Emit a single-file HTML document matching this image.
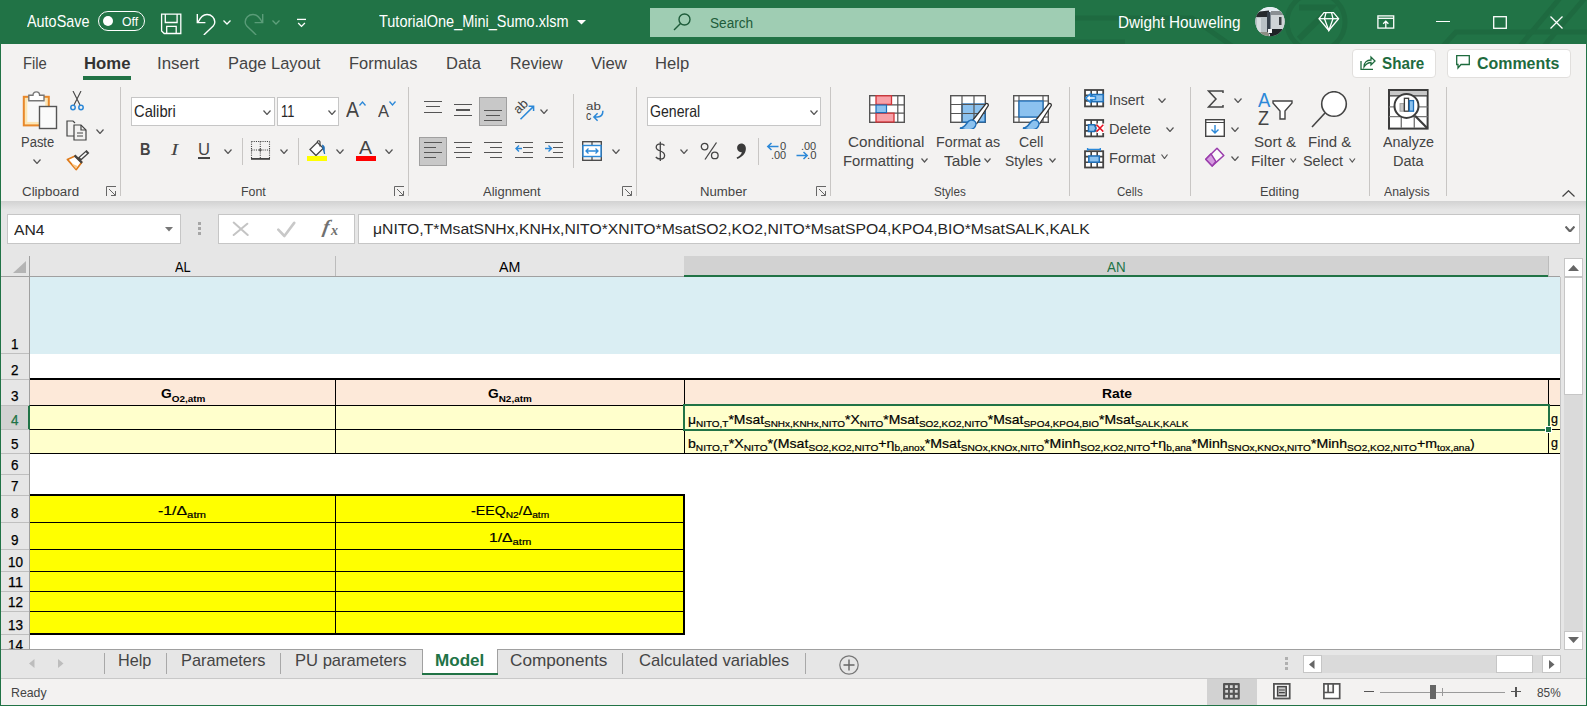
<!DOCTYPE html>
<html><head><meta charset="utf-8"><style>
html,body{margin:0;padding:0;}
body{width:1587px;height:706px;position:relative;overflow:hidden;background:#f3f2f1;font-family:"Liberation Sans",sans-serif;}
.t{position:absolute;white-space:pre;line-height:1.118;transform-origin:0 0;}
.r{position:absolute;box-sizing:border-box;}
svg.r{overflow:hidden;}
</style></head><body>
<div class="r" style="left:0px;top:0px;width:1587px;height:44px;background:#217346"></div>
<svg class="r" style="left:0px;top:0px;" width="1587" height="44" viewBox="0 0 1587 44"><g stroke="#1e6a40" stroke-width="5" fill="none">
<path d="M1075 18 H1192 L1232 46"/>
<circle cx="1316" cy="22" r="29"/>
<path d="M1299 7.5 H1331 L1299 39" stroke-width="6"/>
<path d="M1443 46 L1456 32 H1590"/>
<path d="M1560 -2 L1520 46"/><path d="M1585 -2 L1544 46"/>
<path d="M990 42 H1125"/>
</g></svg>
<div class="t" style="left:27.20px;top:13px;font-size:15.65px;line-height:17px;color:#fff;transform:scaleX(0.9211);">AutoSave</div>
<div class="r" style="left:98px;top:11px;width:47px;height:20px;border:1.5px solid #fff;border-radius:10px"></div>
<div class="r" style="left:103px;top:16px;width:10px;height:10px;background:#fff;border-radius:5px"></div>
<div class="t" style="left:121.90px;top:15px;font-size:12.55px;line-height:14px;color:#fff;transform:scaleX(0.9735);">Off</div>
<svg class="r" style="left:160px;top:13px;" width="22" height="22" viewBox="0 0 22 22"><g fill="none" stroke="#fff" stroke-width="1.3"><path d="M1.6 1.1 H20.8 V20.5 H4.2 L1.6 17.9 Z"/><path d="M5.3 1.1 V9.5 H17.1 V1.1"/><path d="M6.7 20.5 V13.4 H16.2 V20.5"/></g></svg>
<svg class="r" style="left:195px;top:12px;" width="22" height="23" viewBox="0 0 22 23"><g fill="none" stroke="#fff" stroke-width="1.4"><path d="M3 10.3 C5 6 8 2.5 12 2.5 C16.5 2.5 19.8 6 19.8 10 C19.8 11.6 19.2 13 18.2 14 L8.8 23"/><path d="M2.3 2 V10.6 H10.4"/></g></svg>
<svg class="r" style="left:223px;top:20px;" width="8" height="6" viewBox="0 0 8 6"><path d="M0.5 0.5 L4 4 L7.5 0.5" fill="none" stroke="#fff" stroke-width="1.3"/></svg>
<svg class="r" style="left:243px;top:12px;" width="22" height="23" viewBox="0 0 22 23"><g fill="none" stroke="#5a9c78" stroke-width="1.4" transform="translate(22 0) scale(-1 1)"><path d="M3 10.3 C5 6 8 2.5 12 2.5 C16.5 2.5 19.8 6 19.8 10 C19.8 11.6 19.2 13 18.2 14 L8.8 23"/><path d="M2.3 2 V10.6 H10.4"/></g></svg>
<svg class="r" style="left:272px;top:20px;" width="8" height="6" viewBox="0 0 8 6"><path d="M0.5 0.5 L4 4 L7.5 0.5" fill="none" stroke="#5fa07c" stroke-width="1.3"/></svg>
<svg class="r" style="left:296px;top:18px;" width="11" height="10" viewBox="0 0 11 10"><g fill="none" stroke="#fff" stroke-width="1.3"><path d="M1 1.4 H10"/><path d="M2.2 5 L5.5 8.4 L8.9 5"/></g></svg>
<div class="t" style="left:379.00px;top:13px;font-size:15.79px;line-height:17px;color:#fff;transform:scaleX(0.9180);">TutorialOne_Mini_Sumo.xlsm</div>
<svg class="r" style="left:577px;top:19.5px;" width="9" height="5" viewBox="0 0 9 5"><path d="M0 0 H9 L4.5 4.5Z" fill="#fff"/></svg>
<div class="r" style="left:650px;top:8px;width:425px;height:29px;background:#9fcdb3"></div>
<svg class="r" style="left:673px;top:13px;" width="18" height="18" viewBox="0 0 18 18"><g fill="none" stroke="#1e5c3a" stroke-width="1.4"><circle cx="11.5" cy="6.5" r="5.5"/><path d="M7.5 10.5 L1 17"/></g></svg>
<div class="t" style="left:710.40px;top:14px;font-size:15.09px;line-height:17px;color:#1e5c3a;transform:scaleX(0.9039);">Search</div>
<div class="t" style="left:1118.40px;top:14px;font-size:15.93px;line-height:17px;color:#fff;transform:scaleX(0.9614);">Dwight Houweling</div>
<svg class="r" style="left:1255px;top:7px;" width="30" height="30" viewBox="0 0 30 30"><defs><clipPath id="av"><circle cx="15" cy="14.6" r="14.7"/></clipPath></defs>
<g clip-path="url(#av)">
<rect x="0" y="0" width="30" height="30" fill="#c5ced4"/>
<rect x="0" y="0" width="30" height="6" fill="#e6eef3"/>
<path d="M0 5 L14 3.5 L14 10 L0 11 Z" fill="#26292c"/>
<rect x="0" y="10" width="13" height="17" fill="#b9c1c5"/>
<rect x="2" y="11" width="4" height="14" fill="#d6dcdf"/>
<rect x="12" y="5" width="3.5" height="22" fill="#36404a"/>
<rect x="16" y="4" width="14" height="5" fill="#8a8f92"/>
<rect x="16" y="8" width="14" height="15" fill="#cfd4d6"/>
<rect x="24" y="10" width="2.5" height="8" fill="#3b3f42"/>
<rect x="0" y="25" width="14" height="6" fill="#8e8e84"/>
<rect x="15" y="22" width="15" height="9" fill="#1f2326"/>
<rect x="0" y="29" width="30" height="2" fill="#1f2326"/>
<rect x="13" y="22" width="4" height="4" fill="#f4f6f7"/>
</g></svg>
<svg class="r" style="left:1318px;top:11px;" width="22" height="21" viewBox="0 0 22 21"><g fill="none" stroke="#fff" stroke-width="1.3"><path d="M6 1.6 H15.5 L20.6 7.7 L10.8 19.4 L1 7.7 Z"/><path d="M1 7.7 H20.6"/><path d="M8 1.6 L6.5 7.7 L10.8 19.4 L15 7.7 L13.5 1.6"/></g></svg>
<svg class="r" style="left:1377px;top:15px;" width="18" height="14" viewBox="0 0 18 14"><g fill="none" stroke="#fff" stroke-width="1.3"><rect x="0.9" y="0.9" width="15.8" height="12.2"/><path d="M0.9 3.3 H16.7"/><path d="M8.8 13 V6.3 M6.2 8.8 L8.8 6.2 L11.4 8.8"/></g></svg>
<div class="r" style="left:1436px;top:21px;width:14px;height:1.3px;background:#fff"></div>
<svg class="r" style="left:1493px;top:16px;" width="14" height="13" viewBox="0 0 14 13"><rect x="0.7" y="0.7" width="12.6" height="11.6" fill="none" stroke="#fff" stroke-width="1.3"/></svg>
<svg class="r" style="left:1550px;top:16px;" width="13" height="13" viewBox="0 0 13 13"><path d="M0.5 0.5 L12.5 12.5 M12.5 0.5 L0.5 12.5" stroke="#fff" stroke-width="1.3"/></svg>
<div class="r" style="left:0px;top:44px;width:1px;height:662px;background:#217346"></div>
<div class="r" style="left:1586px;top:44px;width:1px;height:662px;background:#217346"></div>
<div class="r" style="left:0px;top:705px;width:1587px;height:1px;background:#217346"></div>
<div class="t" style="left:22.70px;top:53px;font-size:17.20px;line-height:20px;color:#444;transform:scaleX(0.8589);">File</div>
<div class="t" style="left:83.50px;top:53px;font-size:17.20px;line-height:20px;color:#333;font-weight:bold;transform:scaleX(0.9731);">Home</div>
<div class="r" style="left:83px;top:76px;width:48px;height:4px;background:#217346"></div>
<div class="t" style="left:157.00px;top:53px;font-size:17.20px;line-height:20px;color:#444;transform:scaleX(0.9833);">Insert</div>
<div class="t" style="left:228.20px;top:53px;font-size:17.20px;line-height:20px;color:#444;transform:scaleX(0.9576);">Page Layout</div>
<div class="t" style="left:349.20px;top:53px;font-size:17.20px;line-height:20px;color:#444;transform:scaleX(0.9555);">Formulas</div>
<div class="t" style="left:446.30px;top:53px;font-size:17.20px;line-height:20px;color:#444;transform:scaleX(0.9602);">Data</div>
<div class="t" style="left:509.80px;top:53px;font-size:17.20px;line-height:20px;color:#444;transform:scaleX(0.9318);">Review</div>
<div class="t" style="left:591.00px;top:53px;font-size:17.20px;line-height:20px;color:#444;transform:scaleX(0.9726);">View</div>
<div class="t" style="left:655.20px;top:53px;font-size:17.20px;line-height:20px;color:#444;transform:scaleX(0.9666);">Help</div>
<div class="r" style="left:1352px;top:49px;width:84px;height:29px;background:#fff;border:1px solid #e1dfdd;border-radius:4px"></div>
<div class="r" style="left:1447px;top:49px;width:124px;height:29px;background:#fff;border:1px solid #e1dfdd;border-radius:4px"></div>
<div class="t" style="left:1381.70px;top:54px;font-size:16.50px;line-height:18px;color:#1e6b3e;font-weight:bold;transform:scaleX(0.9227);">Share</div>
<div class="t" style="left:1476.70px;top:54px;font-size:16.50px;line-height:18px;color:#1e6b3e;font-weight:bold;transform:scaleX(0.9666);">Comments</div>
<svg class="r" style="left:1360px;top:55px;" width="16" height="15" viewBox="0 0 16 15"><g fill="none" stroke="#1e6b3e" stroke-width="1.3"><path d="M1 6 V14.3 H13"/><path d="M4 12 C4 7 7 5 11 5 V2 L15 6 L11 10 V7.5 C8 7.5 6 9 4 12Z"/></g></svg>
<svg class="r" style="left:1456px;top:55px;" width="15" height="15" viewBox="0 0 15 15"><g fill="none" stroke="#1e6b3e" stroke-width="1.3"><path d="M0.7 0.7 H13.3 V9.5 H5 L2 13 V9.5 H0.7 Z"/></g></svg>
<div class="r" style="left:1px;top:201px;width:1585px;height:55px;background:#e6e6e6"></div>
<div class="r" style="left:1px;top:201px;width:1585px;height:9px;background:linear-gradient(#d2d2d2,#e6e6e6)"></div>
<div class="r" style="left:120px;top:87px;width:1px;height:109px;background:#c8c6c4"></div>
<div class="r" style="left:408px;top:87px;width:1px;height:109px;background:#c8c6c4"></div>
<div class="r" style="left:636px;top:87px;width:1px;height:109px;background:#c8c6c4"></div>
<div class="r" style="left:830px;top:87px;width:1px;height:109px;background:#c8c6c4"></div>
<div class="r" style="left:1069px;top:87px;width:1px;height:109px;background:#c8c6c4"></div>
<div class="r" style="left:1190px;top:87px;width:1px;height:109px;background:#c8c6c4"></div>
<div class="r" style="left:1369px;top:87px;width:1px;height:109px;background:#c8c6c4"></div>
<div class="r" style="left:1446px;top:87px;width:1px;height:109px;background:#c8c6c4"></div>
<div class="t" style="left:21.50px;top:184px;font-size:13.11px;line-height:15px;color:#444;transform:scaleX(1.0175);">Clipboard</div>
<div class="t" style="left:241.20px;top:184px;font-size:13.11px;line-height:15px;color:#444;transform:scaleX(0.9452);">Font</div>
<div class="t" style="left:483.30px;top:184px;font-size:13.11px;line-height:15px;color:#444;transform:scaleX(0.9896);">Alignment</div>
<div class="t" style="left:699.60px;top:184px;font-size:13.11px;line-height:15px;color:#444;transform:scaleX(1.0056);">Number</div>
<div class="t" style="left:933.50px;top:184px;font-size:13.11px;line-height:15px;color:#444;transform:scaleX(0.8907);">Styles</div>
<div class="t" style="left:1116.60px;top:184px;font-size:13.11px;line-height:15px;color:#444;transform:scaleX(0.8817);">Cells</div>
<div class="t" style="left:1259.60px;top:184px;font-size:13.11px;line-height:15px;color:#444;transform:scaleX(0.9727);">Editing</div>
<div class="t" style="left:1384.00px;top:184px;font-size:13.11px;line-height:15px;color:#444;transform:scaleX(0.9339);">Analysis</div>
<svg class="r" style="left:106px;top:186px;" width="11" height="11" viewBox="0 0 11 11"><g fill="none" stroke="#666" stroke-width="1"><path d="M0.5 10 V0.5 H10"/><path d="M3 3 L9.5 9.5 M5 9.5 H9.5 V5"/></g></svg>
<svg class="r" style="left:394px;top:186px;" width="11" height="11" viewBox="0 0 11 11"><g fill="none" stroke="#666" stroke-width="1"><path d="M0.5 10 V0.5 H10"/><path d="M3 3 L9.5 9.5 M5 9.5 H9.5 V5"/></g></svg>
<svg class="r" style="left:622px;top:186px;" width="11" height="11" viewBox="0 0 11 11"><g fill="none" stroke="#666" stroke-width="1"><path d="M0.5 10 V0.5 H10"/><path d="M3 3 L9.5 9.5 M5 9.5 H9.5 V5"/></g></svg>
<svg class="r" style="left:816px;top:186px;" width="11" height="11" viewBox="0 0 11 11"><g fill="none" stroke="#666" stroke-width="1"><path d="M0.5 10 V0.5 H10"/><path d="M3 3 L9.5 9.5 M5 9.5 H9.5 V5"/></g></svg>
<svg class="r" style="left:1562px;top:190px;" width="13" height="7" viewBox="0 0 13 7"><path d="M0.5 6.5 L6.5 0.7 L12.5 6.5" fill="none" stroke="#444" stroke-width="1.2"/></svg>
<svg class="r" style="left:22px;top:90px;" width="36" height="40" viewBox="0 0 36 40"><rect x="1.8" y="6.8" width="25" height="28.6" fill="#fce6b4" stroke="#e8882a" stroke-width="2"/>
<rect x="5.3" y="10.3" width="18" height="21.6" fill="#f8f8f8"/>
<path d="M6.8 10.8 V5.3 H11 C11 3.2 12.4 1.9 14.3 1.9 C16.2 1.9 17.6 3.2 17.6 5.3 H22 V10.8 Z" fill="#fff" stroke="#777" stroke-width="1.4"/>
<rect x="17.5" y="16.5" width="17" height="22" fill="#fafafa" stroke="#555" stroke-width="1.4"/></svg>
<div class="t" style="left:20.60px;top:134px;font-size:14.24px;line-height:16px;color:#444;transform:scaleX(0.9118);">Paste</div>
<svg class="r" style="left:33px;top:159px;" width="8" height="5" viewBox="0 0 8 5"><path d="M0.5 0.5 L4.0 4.5 L7.5 0.5" fill="none" stroke="#555" stroke-width="1.2"/></svg>
<svg class="r" style="left:70px;top:91px;" width="14" height="20" viewBox="0 0 14 20"><g fill="none"><path d="M3 0 L10 14 M11 0 L4 14" stroke="#444" stroke-width="1.1"/><circle cx="3" cy="16.5" r="2.2" stroke="#2b88d8" stroke-width="1.5"/><circle cx="11" cy="16.5" r="2.2" stroke="#2b88d8" stroke-width="1.5"/></g></svg>
<svg class="r" style="left:66px;top:120px;" width="22" height="21" viewBox="0 0 22 21"><g fill="none" stroke="#444" stroke-width="1.2"><path d="M8 16 H1 V1 H7 L9 3"/><path d="M8 5 H15 L20 10 V20 H8 Z"/><path d="M15 5 V10 H20"/><path d="M11 13 H17 M11 16 H17"/></g></svg>
<svg class="r" style="left:96px;top:129px;" width="8" height="5" viewBox="0 0 8 5"><path d="M0.5 0.5 L4.0 4.5 L7.5 0.5" fill="none" stroke="#555" stroke-width="1.2"/></svg>
<svg class="r" style="left:64px;top:150px;" width="26" height="22" viewBox="0 0 26 22"><path d="M22.4 2.9 L16.5 8.2" stroke="#444" stroke-width="4.2" stroke-linecap="square"/><path d="M22.4 2.9 L16.5 8.2" stroke="#fff" stroke-width="1.6"/>
<path d="M3.4 9.4 L11.1 5.9 L17.6 12.4 L12.3 19.6 Z" fill="#fff" stroke="#e07b1a" stroke-width="1.7" stroke-linejoin="round"/>
<path d="M10.6 5.4 L18.1 12.9" stroke="#444" stroke-width="2.2"/>
<path d="M7.5 13.5 L13.5 16 L12 19 Z" fill="#fbc98a"/></svg>
<div class="r" style="left:131px;top:97px;width:144px;height:29px;background:#fff;border:1px solid #c6c6c6"></div>
<div class="t" style="left:134.40px;top:102px;font-size:16.07px;line-height:18px;color:#262626;transform:scaleX(0.9177);">Calibri</div>
<svg class="r" style="left:263px;top:110px;" width="8" height="5" viewBox="0 0 8 5"><path d="M0.5 0.5 L4.0 4.5 L7.5 0.5" fill="none" stroke="#555" stroke-width="1.2"/></svg>
<div class="r" style="left:277px;top:97px;width:62px;height:29px;background:#fff;border:1px solid #c6c6c6"></div>
<div class="t" style="left:280.70px;top:102px;font-size:16.07px;line-height:18px;color:#262626;transform:scaleX(0.7972);">11</div>
<svg class="r" style="left:327.5px;top:110px;" width="8" height="5" viewBox="0 0 8 5"><path d="M0.5 0.5 L4.0 4.5 L7.5 0.5" fill="none" stroke="#555" stroke-width="1.2"/></svg>
<div class="t" style="left:346.00px;top:97px;font-size:21.99px;line-height:25px;color:#444;transform:scaleX(0.8862);">A</div>
<svg class="r" style="left:359px;top:101px;" width="7" height="5" viewBox="0 0 7 5"><path d="M0.5 4.5 L3.5 1 L6.5 4.5" fill="none" stroke="#2b88d8" stroke-width="1.3"/></svg>
<div class="t" style="left:377.80px;top:101px;font-size:17.34px;line-height:20px;color:#444;transform:scaleX(0.9510);">A</div>
<svg class="r" style="left:389px;top:101px;" width="7" height="5" viewBox="0 0 7 5"><path d="M0.5 0.5 L3.5 4 L6.5 0.5" fill="none" stroke="#2b88d8" stroke-width="1.3"/></svg>
<div class="t" style="left:140.00px;top:140px;font-size:17.06px;line-height:19px;color:#444;font-weight:bold;transform:scaleX(0.8525);">B</div>
<div class="t" style="left:171.00px;top:140px;font-size:17.06px;line-height:19px;color:#444;font-style:italic;transform:scaleX(1.2651);font-family:Liberation Serif;">I</div>
<div class="t" style="left:198.30px;top:140px;font-size:17.06px;line-height:19px;color:#444;transform:scaleX(0.9743);">U</div>
<div class="r" style="left:198px;top:157px;width:12px;height:1.5px;background:#444"></div>
<svg class="r" style="left:224px;top:149px;" width="8" height="5" viewBox="0 0 8 5"><path d="M0.5 0.5 L4.0 4.5 L7.5 0.5" fill="none" stroke="#555" stroke-width="1.2"/></svg>
<div class="r" style="left:242px;top:138px;width:1px;height:27px;background:#c8c6c4"></div>
<svg class="r" style="left:250px;top:140px;" width="21" height="20" viewBox="0 0 21 20"><g fill="none" stroke="#444" stroke-width="1.1" stroke-dasharray="1.1 1.1"><path d="M1.5 1.5 H19.5 M1.5 10 H19.5 M1.5 1.5 V18 M10.3 1.5 V18 M19.5 1.5 V18"/></g><circle cx="10.3" cy="10" r="1" fill="none" stroke="#444" stroke-width="0.8"/><path d="M1 18.9 H20" stroke="#444" stroke-width="1.8"/></svg>
<svg class="r" style="left:280px;top:149px;" width="8" height="5" viewBox="0 0 8 5"><path d="M0.5 0.5 L4.0 4.5 L7.5 0.5" fill="none" stroke="#555" stroke-width="1.2"/></svg>
<div class="r" style="left:298px;top:138px;width:1px;height:27px;background:#c8c6c4"></div>
<svg class="r" style="left:307px;top:140px;" width="20" height="16" viewBox="0 0 20 16"><path d="M3 9.5 L10.3 2.3 L16.3 8.3 L9 15.5 Z" fill="#fff" stroke="#444" stroke-width="1.3"/><path d="M10.3 2.3 V1.8 A1.4 1.4 0 0 1 13 1.8 V6.5" fill="none" stroke="#444" stroke-width="1.2"/><path d="M15 4.5 C17.5 5 18 7 17.8 9 C17.6 11 18 12.5 18.2 14 L17 14 C16.5 12 16 10 15.5 8.5 Z" fill="#1f6fb8"/></svg>
<div class="r" style="left:307px;top:156px;width:20px;height:5px;background:#ffff00"></div>
<svg class="r" style="left:336px;top:149px;" width="8" height="5" viewBox="0 0 8 5"><path d="M0.5 0.5 L4.0 4.5 L7.5 0.5" fill="none" stroke="#555" stroke-width="1.2"/></svg>
<div class="t" style="left:359.40px;top:138px;font-size:17.76px;line-height:20px;color:#444;transform:scaleX(1.0971);">A</div>
<div class="r" style="left:356px;top:156px;width:20px;height:5px;background:#ff0000"></div>
<svg class="r" style="left:385px;top:149px;" width="8" height="5" viewBox="0 0 8 5"><path d="M0.5 0.5 L4.0 4.5 L7.5 0.5" fill="none" stroke="#555" stroke-width="1.2"/></svg>
<div class="r" style="left:479px;top:97px;width:28px;height:29px;background:#c8c8c8;border:1px solid #a0a0a0"></div>
<div class="r" style="left:419px;top:137px;width:28px;height:29px;background:#c8c8c8;border:1px solid #a0a0a0"></div>
<div class="r" style="left:424px;top:100.5px;width:18px;height:1.3px;background:#555"></div>
<div class="r" style="left:426px;top:106px;width:14px;height:1.3px;background:#555"></div>
<div class="r" style="left:424px;top:111.5px;width:18px;height:1.3px;background:#555"></div>
<div class="r" style="left:454px;top:104px;width:18px;height:1.3px;background:#555"></div>
<div class="r" style="left:456px;top:109.3px;width:14px;height:1.3px;background:#555"></div>
<div class="r" style="left:454px;top:114.8px;width:18px;height:1.3px;background:#555"></div>
<div class="r" style="left:484px;top:109.5px;width:18px;height:1.3px;background:#555"></div>
<div class="r" style="left:486px;top:114.8px;width:14px;height:1.3px;background:#555"></div>
<div class="r" style="left:484px;top:119.8px;width:18px;height:1.3px;background:#555"></div>
<div class="r" style="left:424px;top:142px;width:18px;height:1.3px;background:#555"></div>
<div class="r" style="left:424px;top:147px;width:12px;height:1.3px;background:#555"></div>
<div class="r" style="left:424px;top:152px;width:18px;height:1.3px;background:#555"></div>
<div class="r" style="left:424px;top:157px;width:12px;height:1.3px;background:#555"></div>
<div class="r" style="left:454px;top:142px;width:18px;height:1.3px;background:#555"></div>
<div class="r" style="left:456px;top:147px;width:14px;height:1.3px;background:#555"></div>
<div class="r" style="left:454px;top:152px;width:18px;height:1.3px;background:#555"></div>
<div class="r" style="left:456px;top:157px;width:14px;height:1.3px;background:#555"></div>
<div class="r" style="left:484px;top:142px;width:18px;height:1.3px;background:#555"></div>
<div class="r" style="left:490px;top:147px;width:12px;height:1.3px;background:#555"></div>
<div class="r" style="left:484px;top:152px;width:18px;height:1.3px;background:#555"></div>
<div class="r" style="left:490px;top:157px;width:12px;height:1.3px;background:#555"></div>
<div class="r" style="left:515px;top:142px;width:18px;height:1.3px;background:#555"></div>
<div class="r" style="left:523px;top:147px;width:10px;height:1.3px;background:#555"></div>
<div class="r" style="left:523px;top:152px;width:10px;height:1.3px;background:#555"></div>
<div class="r" style="left:515px;top:157px;width:18px;height:1.3px;background:#555"></div>
<svg class="r" style="left:515px;top:145px;" width="8" height="7" viewBox="0 0 8 7"><path d="M7 3.5 H1 M4 0.5 L1 3.5 L4 6.5" fill="none" stroke="#2b88d8" stroke-width="1.4"/></svg>
<div class="r" style="left:545px;top:142px;width:18px;height:1.3px;background:#555"></div>
<div class="r" style="left:553px;top:147px;width:10px;height:1.3px;background:#555"></div>
<div class="r" style="left:553px;top:152px;width:10px;height:1.3px;background:#555"></div>
<div class="r" style="left:545px;top:157px;width:18px;height:1.3px;background:#555"></div>
<svg class="r" style="left:545px;top:145px;" width="8" height="7" viewBox="0 0 8 7"><path d="M0 3.5 H6.5 M3.5 0.5 L6.5 3.5 L3.5 6.5" fill="none" stroke="#2b88d8" stroke-width="1.4"/></svg>
<svg class="r" style="left:508px;top:96px;" width="30" height="28" viewBox="0 0 30 28"><text x="12.8" y="14.6" font-family="Liberation Sans" font-size="13" fill="#444" text-anchor="middle" transform="rotate(-45 12.8 10.5)">ab</text><path d="M12.5 23.2 L25.3 10.6 M20.6 10.3 H25.6 V15" fill="none" stroke="#2b88d8" stroke-width="1.5"/></svg>
<svg class="r" style="left:540px;top:109px;" width="8" height="5" viewBox="0 0 8 5"><path d="M0.5 0.5 L4.0 4.5 L7.5 0.5" fill="none" stroke="#555" stroke-width="1.2"/></svg>
<div class="r" style="left:573px;top:94px;width:1px;height:74px;background:#c8c6c4"></div>
<div class="t" style="left:586.20px;top:100px;font-size:10.86px;line-height:12px;color:#444;transform:scaleX(1.2343);">ab</div>
<div class="t" style="left:586.20px;top:108px;font-size:12.83px;line-height:15px;color:#444;transform:scaleX(0.8262);">c</div>
<svg class="r" style="left:591px;top:109px;" width="14" height="14" viewBox="0 0 14 14"><path d="M11.9 1.8 C11.9 5.8 10 8 6.5 8 H3.2 M6.6 4.3 L2.9 8 L6.6 11.7" fill="none" stroke="#2b88d8" stroke-width="1.5"/></svg>
<svg class="r" style="left:582px;top:141px;" width="20" height="20" viewBox="0 0 20 20"><rect x="0.7" y="0.7" width="18.6" height="18.6" fill="none" stroke="#444" stroke-width="1.3"/>
<path d="M0.7 5 H19.3 M0.7 15 H19.3 M10 0.7 V5 M10 15 V19.3" stroke="#444" stroke-width="1.2"/>
<rect x="1" y="4.5" width="18" height="11" fill="#fff" stroke="#2b88d8" stroke-width="1.4"/>
<path d="M4 10 H16 M6.5 7.5 L4 10 L6.5 12.5 M13.5 7.5 L16 10 L13.5 12.5" fill="none" stroke="#2b88d8" stroke-width="1.3"/></svg>
<svg class="r" style="left:612px;top:149px;" width="8" height="5" viewBox="0 0 8 5"><path d="M0.5 0.5 L4.0 4.5 L7.5 0.5" fill="none" stroke="#555" stroke-width="1.2"/></svg>
<div class="r" style="left:647px;top:97px;width:174px;height:29px;background:#fff;border:1px solid #c6c6c6"></div>
<div class="t" style="left:650.30px;top:102px;font-size:16.07px;line-height:18px;color:#262626;transform:scaleX(0.8778);">General</div>
<svg class="r" style="left:809.5px;top:110px;" width="8" height="5" viewBox="0 0 8 5"><path d="M0.5 0.5 L4.0 4.5 L7.5 0.5" fill="none" stroke="#555" stroke-width="1.2"/></svg>
<svg class="r" style="left:654px;top:141px;" width="13" height="21" viewBox="0 0 13 21"><path d="M10.5 4.5 C9.5 3.2 8 2.8 6.3 2.8 C3.8 2.8 2.2 4.2 2.2 6.2 C2.2 8.3 4 9.2 6.3 10 C8.8 10.9 10.6 11.9 10.6 14.4 C10.6 16.6 8.9 18 6.3 18 C4.3 18 2.8 17.3 1.8 16 M6.3 0.8 V20" fill="none" stroke="#444" stroke-width="1.3"/></svg>
<svg class="r" style="left:680px;top:149px;" width="8" height="5" viewBox="0 0 8 5"><path d="M0.5 0.5 L4.0 4.5 L7.5 0.5" fill="none" stroke="#555" stroke-width="1.2"/></svg>
<svg class="r" style="left:700px;top:141px;" width="20" height="20" viewBox="0 0 20 20"><circle cx="4.6" cy="5.6" r="3.3" fill="none" stroke="#444" stroke-width="1.3"/><circle cx="14.8" cy="14.4" r="3.3" fill="none" stroke="#444" stroke-width="1.3"/><path d="M16.5 1.5 L5 18.5" stroke="#444" stroke-width="1.3"/></svg>
<svg class="r" style="left:735px;top:143px;" width="12" height="17" viewBox="0 0 12 17"><path d="M6 0.5 C9.5 0.5 11.3 3.2 10.8 6.8 C10.3 10.8 7 14.3 2.3 16 L1.6 14.6 C4.5 13.2 6.3 11.2 6.9 9.2 A4 4 0 1 1 6 0.5Z" fill="#3a3a3a"/></svg>
<div class="r" style="left:758px;top:138px;width:1px;height:27px;background:#c8c6c4"></div>
<div class="t" style="left:779.80px;top:140px;font-size:10.72px;line-height:12px;color:#444;transform:scaleX(1.0407);">0</div>
<div class="t" style="left:770.80px;top:149px;font-size:10.72px;line-height:12px;color:#444;transform:scaleX(1.0205);">.00</div>
<svg class="r" style="left:766px;top:142px;" width="13" height="9" viewBox="0 0 13 9"><path d="M12.5 4.5 H1.8 M5.5 1 L1.8 4.5 L5.5 8" fill="none" stroke="#2b88d8" stroke-width="1.5"/></svg>
<div class="t" style="left:800.80px;top:140px;font-size:10.72px;line-height:12px;color:#444;transform:scaleX(1.0205);">.00</div>
<div class="t" style="left:806.60px;top:149px;font-size:10.72px;line-height:12px;color:#444;transform:scaleX(1.0519);">.0</div>
<svg class="r" style="left:796px;top:151px;" width="13" height="9" viewBox="0 0 13 9"><path d="M0.5 4.5 H11.2 M7.5 1 L11.2 4.5 L7.5 8" fill="none" stroke="#2b88d8" stroke-width="1.5"/></svg>
<div class="t" style="left:848.40px;top:134px;font-size:14.24px;line-height:16px;color:#444;transform:scaleX(1.0724);">Conditional</div>
<div class="t" style="left:843.40px;top:153px;font-size:14.24px;line-height:16px;color:#444;transform:scaleX(1.0433);">Formatting</div>
<svg class="r" style="left:921px;top:158px;" width="7" height="4.5" viewBox="0 0 7 4.5"><path d="M0.5 0.5 L3.5 4.0 L6.5 0.5" fill="none" stroke="#555" stroke-width="1.2"/></svg>
<div class="t" style="left:935.50px;top:134px;font-size:14.24px;line-height:16px;color:#444;transform:scaleX(1.0017);">Format as</div>
<div class="t" style="left:943.80px;top:153px;font-size:14.24px;line-height:16px;color:#444;transform:scaleX(1.0867);">Table</div>
<svg class="r" style="left:984px;top:158px;" width="7" height="4.5" viewBox="0 0 7 4.5"><path d="M0.5 0.5 L3.5 4.0 L6.5 0.5" fill="none" stroke="#555" stroke-width="1.2"/></svg>
<div class="t" style="left:1019.20px;top:134px;font-size:14.24px;line-height:16px;color:#444;transform:scaleX(0.9904);">Cell</div>
<div class="t" style="left:1005.40px;top:153px;font-size:14.24px;line-height:16px;color:#444;transform:scaleX(0.9697);">Styles</div>
<svg class="r" style="left:1049px;top:158px;" width="7" height="4.5" viewBox="0 0 7 4.5"><path d="M0.5 0.5 L3.5 4.0 L6.5 0.5" fill="none" stroke="#555" stroke-width="1.2"/></svg>
<svg class="r" style="left:869px;top:95px;" width="36" height="28" viewBox="0 0 36 28"><rect x="0.7" y="0.7" width="34.6" height="26.6" fill="#fff" stroke="#555" stroke-width="1.4"/>
<path d="M0.7 9.8 H35 M0.7 18.2 H35 M28.8 0.7 V27" stroke="#555" stroke-width="1.2" fill="none"/>
<rect x="7" y="0.8" width="15.5" height="8.6" fill="#f7a1a8" stroke="#d13438" stroke-width="1.3"/>
<rect x="7" y="18.2" width="18" height="8.8" fill="#f7a1a8" stroke="#d13438" stroke-width="1.3"/>
<rect x="7" y="10" width="10.5" height="7.6" fill="#8cc2ef" stroke="#1f6fb8" stroke-width="1.2"/></svg>
<svg class="r" style="left:950px;top:95px;" width="39" height="34" viewBox="0 0 39 34"><rect x="0.7" y="0.7" width="34.6" height="26.6" fill="#fff" stroke="#555" stroke-width="1.4"/>
<rect x="12" y="9" width="23" height="18" fill="#8cc2ef" stroke="#1f6fb8" stroke-width="1.3"/>
<path d="M0.7 9.5 H35 M0.7 18.5 H35 M12 0.7 V27 M24 0.7 V27" stroke="#555" stroke-width="1.2" fill="none"/>
<path d="M22.5 25.5 L36 8.5 A1.8 1.8 0 0 1 38.3 10.5 L26.5 29" fill="#fff" stroke="#333" stroke-width="1.3"/>
<path d="M10 33 C13 33 15 31 17 28 C19 25 22 24 24.5 26 C27 28 26 31 24 33 C21 35.5 15 35.5 10 33Z" fill="#8cc2ef" stroke="#1f6fb8" stroke-width="1.4"/></svg>
<svg class="r" style="left:1013px;top:95px;" width="39" height="34" viewBox="0 0 39 34"><rect x="0.7" y="0.7" width="34.6" height="26.6" fill="#fff" stroke="#555" stroke-width="1.4"/>
<path d="M0.7 6 H35 M0.7 22 H35 M6 0.7 V27 M30 0.7 V27" stroke="#555" stroke-width="1.2" fill="none"/>
<rect x="6" y="6" width="24" height="16" fill="#8cc2ef" stroke="#1f6fb8" stroke-width="1.3"/>
<path d="M22.5 25.5 L36 8.5 A1.8 1.8 0 0 1 38.3 10.5 L26.5 29" fill="#fff" stroke="#333" stroke-width="1.3"/>
<path d="M10 33 C13 33 15 31 17 28 C19 25 22 24 24.5 26 C27 28 26 31 24 33 C21 35.5 15 35.5 10 33Z" fill="#8cc2ef" stroke="#1f6fb8" stroke-width="1.4"/></svg>
<svg class="r" style="left:1084px;top:89px;" width="21" height="19" viewBox="0 0 21 19"><rect x="1" y="1" width="18.2" height="16.4" fill="#fff" stroke="#444" stroke-width="1.8"/><path d="M1 6.3 H19.2 M1 11.9 H19.2 M7.2 1 V17.4 M13.2 1 V17.4" stroke="#444" stroke-width="1.6"/><rect x="8" y="5.5" width="11.2" height="7.2" fill="#8cc2ef" stroke="#1f6fb8" stroke-width="1.5"/><path d="M11.5 7.6 H6.5 V4.8 L1.6 9.1 L6.5 13.4 V10.6 H11.5 Z" fill="#fff" stroke="#2b88d8" stroke-width="1.5" stroke-linejoin="round"/></svg>
<svg class="r" style="left:1084px;top:119px;" width="21" height="19" viewBox="0 0 21 19"><rect x="1" y="1" width="18.2" height="16.4" fill="#fff" stroke="#444" stroke-width="1.8"/><path d="M1 6.3 H19.2 M1 11.9 H19.2 M7.2 1 V17.4 M13.2 1 V17.4" stroke="#444" stroke-width="1.6"/><rect x="12.5" y="4.5" width="8" height="9.5" fill="#fff"/><path d="M4.5 5.8 H10.3 L12 9.2 L10.3 12.5 H4.5 Z" fill="#8cc2ef" stroke="#1f6fb8" stroke-width="1.5"/><path d="M12.6 5.8 L19.3 12.6 M19.3 5.8 L12.6 12.6" stroke="#e81123" stroke-width="1.5"/></svg>
<svg class="r" style="left:1084px;top:148px;" width="21" height="21" viewBox="0 0 21 21"><rect x="1" y="3.2" width="18.2" height="16.3" fill="#fff" stroke="#444" stroke-width="1.8"/><path d="M1 8.6 H19.2 M1 14.2 H19.2 M7.2 3.2 V19.5 M13.2 3.2 V19.5" stroke="#444" stroke-width="1.6"/><rect x="4.8" y="8" width="10.5" height="6.2" fill="#8cc2ef" stroke="#1f6fb8" stroke-width="1.5"/><path d="M3.6 1.4 H16.3 M3.6 0 V2.8 M16.3 0 V2.8" stroke="#2b88d8" stroke-width="1.4"/></svg>
<div class="t" style="left:1108.60px;top:91px;font-size:15.09px;line-height:17px;color:#444;transform:scaleX(0.9330);">Insert</div>
<svg class="r" style="left:1157.5px;top:97.5px;" width="8" height="5" viewBox="0 0 8 5"><path d="M0.5 0.5 L4.0 4.5 L7.5 0.5" fill="none" stroke="#555" stroke-width="1.2"/></svg>
<div class="t" style="left:1109.20px;top:121px;font-size:14.80px;line-height:16px;color:#444;transform:scaleX(0.9814);">Delete</div>
<svg class="r" style="left:1166px;top:126.5px;" width="8" height="5" viewBox="0 0 8 5"><path d="M0.5 0.5 L4.0 4.5 L7.5 0.5" fill="none" stroke="#555" stroke-width="1.2"/></svg>
<div class="t" style="left:1108.60px;top:149px;font-size:15.09px;line-height:17px;color:#444;transform:scaleX(0.9691);">Format</div>
<svg class="r" style="left:1160.5px;top:154px;" width="7" height="5" viewBox="0 0 7 5"><path d="M0.5 0.5 L3.5 4.5 L6.5 0.5" fill="none" stroke="#555" stroke-width="1.2"/></svg>
<svg class="r" style="left:1207px;top:90px;" width="17" height="18" viewBox="0 0 17 18"><path d="M16 3 V1 H1.5 L9 9 L1.5 17 H16 V15" fill="none" stroke="#444" stroke-width="1.5"/></svg>
<svg class="r" style="left:1233.8px;top:97.5px;" width="8" height="5" viewBox="0 0 8 5"><path d="M0.5 0.5 L4.0 4.5 L7.5 0.5" fill="none" stroke="#555" stroke-width="1.2"/></svg>
<svg class="r" style="left:1205px;top:119px;" width="20" height="18" viewBox="0 0 20 18"><rect x="0.7" y="0.7" width="18.6" height="16.6" fill="#fff" stroke="#444" stroke-width="1.4"/><path d="M0.7 3.5 H19.3" stroke="#444" stroke-width="1"/><path d="M10 6 V13.5 M6.5 10.5 L10 14 L13.5 10.5" fill="none" stroke="#2b88d8" stroke-width="1.4"/></svg>
<svg class="r" style="left:1231px;top:126.5px;" width="8" height="5" viewBox="0 0 8 5"><path d="M0.5 0.5 L4.0 4.5 L7.5 0.5" fill="none" stroke="#555" stroke-width="1.2"/></svg>
<svg class="r" style="left:1205px;top:147px;" width="20" height="20" viewBox="0 0 20 20"><path d="M0.8 12.2 L12 1.2 L18.8 8.5 L7.2 18.9 Z" fill="#fafafa" stroke="#9a3dac" stroke-width="1.5" stroke-linejoin="round"/><path d="M0.8 12.2 L6 6.9 L10.9 14.6 L7.2 18.9 Z" fill="#d59be0" stroke="#9a3dac" stroke-width="1.5" stroke-linejoin="round"/></svg>
<svg class="r" style="left:1231px;top:155.5px;" width="8" height="5" viewBox="0 0 8 5"><path d="M0.5 0.5 L4.0 4.5 L7.5 0.5" fill="none" stroke="#555" stroke-width="1.2"/></svg>
<div class="t" style="left:1257.70px;top:88px;font-size:20.44px;line-height:23px;color:#2b88d8;transform:scaleX(0.9020);">A</div>
<div class="t" style="left:1257.70px;top:106px;font-size:20.44px;line-height:23px;color:#444;transform:scaleX(0.8806);">Z</div>
<svg class="r" style="left:1272px;top:100px;" width="21" height="20" viewBox="0 0 21 20"><path d="M1 1 H20 V3 L13 11 V19 H8 V11 L1 3 Z" fill="#fff" stroke="#444" stroke-width="1.4"/></svg>
<svg class="r" style="left:1311px;top:91px;" width="37" height="37" viewBox="0 0 37 37"><circle cx="23" cy="13" r="12.3" fill="#fff" stroke="#444" stroke-width="1.6"/><path d="M14 22 L1 36" stroke="#444" stroke-width="1.6"/></svg>
<div class="t" style="left:1253.50px;top:134px;font-size:14.24px;line-height:16px;color:#444;transform:scaleX(1.0613);">Sort &amp;</div>
<div class="t" style="left:1251.30px;top:153px;font-size:14.24px;line-height:16px;color:#444;transform:scaleX(1.0746);">Filter</div>
<svg class="r" style="left:1290px;top:158px;" width="6.5" height="4.5" viewBox="0 0 6.5 4.5"><path d="M0.5 0.5 L3.25 4.0 L6.0 0.5" fill="none" stroke="#555" stroke-width="1.2"/></svg>
<div class="t" style="left:1308.40px;top:134px;font-size:14.24px;line-height:16px;color:#444;transform:scaleX(1.0522);">Find &amp;</div>
<div class="t" style="left:1303.40px;top:153px;font-size:14.24px;line-height:16px;color:#444;transform:scaleX(1.0108);">Select</div>
<svg class="r" style="left:1349px;top:158px;" width="6.5" height="4.5" viewBox="0 0 6.5 4.5"><path d="M0.5 0.5 L3.25 4.0 L6.0 0.5" fill="none" stroke="#555" stroke-width="1.2"/></svg>
<svg class="r" style="left:1388px;top:89px;" width="41" height="41" viewBox="0 0 41 41"><rect x="1" y="1" width="38.6" height="38.6" fill="#fff" stroke="#3c3c3c" stroke-width="2"/>
<rect x="2" y="2" width="36.6" height="4.8" fill="#c8c8c8"/>
<path d="M1 6.8 H39.6" stroke="#3c3c3c" stroke-width="1.3"/>
<path d="M1 17.9 H39.6 M1 27.6 H39.6 M13.3 27.6 V39 M26.3 27.6 V39" stroke="#7a7a7a" stroke-width="1.4"/>
<path d="M27 26.7 L39.6 39.4" stroke="#3c3c3c" stroke-width="2.2"/>
<circle cx="18.5" cy="16.9" r="12" fill="#fff" stroke="#3c3c3c" stroke-width="2"/>
<rect x="12" y="14.6" width="3.8" height="7.6" fill="#c8c8c8" stroke="#9a9a9a" stroke-width="0.9"/>
<rect x="16.4" y="9.3" width="4.2" height="12.9" fill="#fff" stroke="#3c3c3c" stroke-width="1.3"/>
<rect x="21.3" y="11.6" width="4.2" height="10.6" fill="#8cc2ef" stroke="#1f6fb8" stroke-width="1.3"/></svg>
<div class="t" style="left:1382.50px;top:134px;font-size:14.24px;line-height:16px;color:#444;transform:scaleX(1.0086);">Analyze</div>
<div class="t" style="left:1392.80px;top:153px;font-size:14.24px;line-height:16px;color:#444;transform:scaleX(1.0203);">Data</div>
<div class="r" style="left:7px;top:214px;width:174px;height:30px;background:#fff;border:1px solid #c6c6c6"></div>
<div class="t" style="left:14.00px;top:221px;font-size:15.37px;line-height:17px;color:#262626;transform:scaleX(1.0237);">AN4</div>
<svg class="r" style="left:165px;top:227px;" width="8" height="5" viewBox="0 0 8 5"><path d="M0 0 H8 L4 4.5Z" fill="#777"/></svg>
<div class="r" style="left:198px;top:222px;width:3px;height:3px;background:#a6a6a6"></div>
<div class="r" style="left:198px;top:227px;width:3px;height:3px;background:#a6a6a6"></div>
<div class="r" style="left:198px;top:232px;width:3px;height:3px;background:#a6a6a6"></div>
<div class="r" style="left:218px;top:214px;width:137px;height:30px;background:#fff;border:1px solid #c6c6c6"></div>
<svg class="r" style="left:232px;top:221px;" width="17" height="16" viewBox="0 0 17 16"><path d="M1.7 1.6 L15.7 14 M15.3 2.7 L1.7 14" stroke="#c4c4c4" stroke-width="2" stroke-linecap="round"/></svg>
<svg class="r" style="left:277px;top:221px;" width="19" height="17" viewBox="0 0 19 17"><path d="M1.3 8.7 L7.4 15 L17.2 1.9" fill="none" stroke="#c8c8c8" stroke-width="2.6" stroke-linecap="round" stroke-linejoin="round"/></svg>
<div class="t" style="left:325px;top:216px;font-family:Liberation Serif;font-style:italic;font-weight:bold;font-size:19px;line-height:22px;color:#707070;transform:skewX(-10deg);">f</div>
<div class="t" style="left:331px;top:223px;font-family:Liberation Serif;font-style:italic;font-weight:bold;font-size:14px;line-height:16px;color:#707070;">x</div>
<div class="r" style="left:358px;top:214px;width:1222px;height:30px;background:#fff;border:1px solid #c6c6c6"></div>
<div class="t" style="left:372.80px;top:221px;font-size:13.82px;line-height:16px;color:#262626;transform:scaleX(1.1386);">μNITO,T*MsatSNHx,KNHx,NITO*XNITO*MsatSO2,KO2,NITO*MsatSPO4,KPO4,BIO*MsatSALK,KALK</div>
<svg class="r" style="left:1565px;top:225.5px;" width="10" height="6" viewBox="0 0 10 6"><path d="M0.5 0.5 L5.0 5.5 L9.5 0.5" fill="none" stroke="#666" stroke-width="2.2"/></svg>
<div class="r" style="left:1px;top:256px;width:1585px;height:21px;background:#e6e6e6"></div>
<div class="r" style="left:684px;top:256px;width:864px;height:20px;background:#d2d2d2"></div>
<div class="r" style="left:1px;top:276px;width:1559px;height:1px;background:#a0a0a0"></div>
<div class="r" style="left:684px;top:275px;width:864px;height:2px;background:#217346"></div>
<div class="r" style="left:29px;top:256px;width:1px;height:394px;background:#a0a0a0"></div>
<div class="r" style="left:335px;top:256px;width:1px;height:20px;background:#bcbcbc"></div>
<div class="r" style="left:1548px;top:256px;width:1px;height:20px;background:#bcbcbc"></div>
<svg class="r" style="left:13px;top:261px;" width="13" height="12" viewBox="0 0 13 12"><path d="M13 0 V12 H0 Z" fill="#b4b4b4"/></svg>
<div class="t" style="left:175.00px;top:259px;font-size:14.24px;line-height:16px;color:#000;transform:scaleX(0.9015);">AL</div>
<div class="t" style="left:499.00px;top:259px;font-size:14.24px;line-height:16px;color:#000;transform:scaleX(1.0019);">AM</div>
<div class="t" style="left:1107.20px;top:259px;font-size:14.24px;line-height:16px;color:#217346;transform:scaleX(0.9353);">AN</div>
<div class="r" style="left:30px;top:277px;width:1530px;height:372px;background:#fff"></div>
<div class="r" style="left:1560px;top:256px;width:26px;height:394px;background:#e6e6e6"></div>
<div class="r" style="left:1560px;top:277px;width:1px;height:373px;background:#c6c6c6"></div>
<div class="r" style="left:1px;top:277px;width:28px;height:373px;background:#e6e6e6"></div>
<div class="r" style="left:1px;top:405px;width:28px;height:25px;background:#d2d2d2"></div>
<div class="r" style="left:28px;top:405px;width:2px;height:25px;background:#217346"></div>
<div class="r" style="left:1px;top:353px;width:28px;height:1px;background:#bfbfbf"></div>
<div class="r" style="left:1px;top:379px;width:28px;height:1px;background:#bfbfbf"></div>
<div class="r" style="left:1px;top:405px;width:28px;height:1px;background:#bfbfbf"></div>
<div class="r" style="left:1px;top:429px;width:28px;height:1px;background:#bfbfbf"></div>
<div class="r" style="left:1px;top:453px;width:28px;height:1px;background:#bfbfbf"></div>
<div class="r" style="left:1px;top:474px;width:28px;height:1px;background:#bfbfbf"></div>
<div class="r" style="left:1px;top:495px;width:28px;height:1px;background:#bfbfbf"></div>
<div class="r" style="left:1px;top:522px;width:28px;height:1px;background:#bfbfbf"></div>
<div class="r" style="left:1px;top:549px;width:28px;height:1px;background:#bfbfbf"></div>
<div class="r" style="left:1px;top:571px;width:28px;height:1px;background:#bfbfbf"></div>
<div class="r" style="left:1px;top:591px;width:28px;height:1px;background:#bfbfbf"></div>
<div class="r" style="left:1px;top:611px;width:28px;height:1px;background:#bfbfbf"></div>
<div class="r" style="left:1px;top:634px;width:28px;height:1px;background:#bfbfbf"></div>
<div class="r" style="left:0;top:0;width:29px;height:649px;overflow:hidden"><div class="t" style="left:11.25px;top:336px;font-size:14.38px;line-height:16px;color:#000;transform:scaleX(0.9380);-webkit-text-stroke:0.25px #000;">1</div><div class="t" style="left:11.25px;top:362px;font-size:14.38px;line-height:16px;color:#000;transform:scaleX(0.9380);-webkit-text-stroke:0.25px #000;">2</div><div class="t" style="left:11.25px;top:388px;font-size:14.38px;line-height:16px;color:#000;transform:scaleX(0.9380);-webkit-text-stroke:0.25px #000;">3</div><div class="t" style="left:11.25px;top:412px;font-size:14.38px;line-height:16px;color:#217346;transform:scaleX(0.9380);-webkit-text-stroke:0.25px #217346;">4</div><div class="t" style="left:11.25px;top:436px;font-size:14.38px;line-height:16px;color:#000;transform:scaleX(0.9380);-webkit-text-stroke:0.25px #000;">5</div><div class="t" style="left:11.25px;top:457px;font-size:14.38px;line-height:16px;color:#000;transform:scaleX(0.9380);-webkit-text-stroke:0.25px #000;">6</div><div class="t" style="left:11.25px;top:478px;font-size:14.38px;line-height:16px;color:#000;transform:scaleX(0.9380);-webkit-text-stroke:0.25px #000;">7</div><div class="t" style="left:11.25px;top:505px;font-size:14.38px;line-height:16px;color:#000;transform:scaleX(0.9380);-webkit-text-stroke:0.25px #000;">8</div><div class="t" style="left:11.25px;top:532px;font-size:14.38px;line-height:16px;color:#000;transform:scaleX(0.9380);-webkit-text-stroke:0.25px #000;">9</div><div class="t" style="left:7.50px;top:554px;font-size:14.38px;line-height:16px;color:#000;transform:scaleX(0.9380);-webkit-text-stroke:0.25px #000;">10</div><div class="t" style="left:7.50px;top:574px;font-size:14.38px;line-height:16px;color:#000;transform:scaleX(1.0049);-webkit-text-stroke:0.25px #000;">11</div><div class="t" style="left:7.50px;top:594px;font-size:14.38px;line-height:16px;color:#000;transform:scaleX(0.9380);-webkit-text-stroke:0.25px #000;">12</div><div class="t" style="left:7.50px;top:617px;font-size:14.38px;line-height:16px;color:#000;transform:scaleX(0.9380);-webkit-text-stroke:0.25px #000;">13</div><div class="t" style="left:7.50px;top:637px;font-size:14.38px;line-height:16px;color:#000;transform:scaleX(0.9380);-webkit-text-stroke:0.25px #000;">14</div></div>
<div class="r" style="left:30px;top:277px;width:1530px;height:77px;background:#daeef3"></div>
<div class="r" style="left:30px;top:380px;width:1530px;height:25px;background:#fde9d9"></div>
<div class="r" style="left:30px;top:405px;width:1530px;height:48px;background:#ffffcc"></div>
<div class="r" style="left:30px;top:378px;width:1530px;height:2px;background:#000"></div>
<div class="r" style="left:30px;top:405px;width:1530px;height:1px;background:#000"></div>
<div class="r" style="left:30px;top:429px;width:1530px;height:1px;background:#000"></div>
<div class="r" style="left:30px;top:453px;width:1530px;height:1px;background:#000"></div>
<div class="r" style="left:335px;top:380px;width:1px;height:73px;background:#000"></div>
<div class="r" style="left:684px;top:380px;width:1px;height:73px;background:#000"></div>
<div class="r" style="left:1548px;top:380px;width:1px;height:73px;background:#000"></div>
<div class="r" style="left:30px;top:495px;width:654px;height:139px;background:#ffff00"></div>
<div class="r" style="left:30px;top:494px;width:655px;height:2px;background:#000"></div>
<div class="r" style="left:30px;top:633px;width:655px;height:2px;background:#000"></div>
<div class="r" style="left:30px;top:522px;width:654px;height:1px;background:#000"></div>
<div class="r" style="left:30px;top:549px;width:654px;height:1px;background:#000"></div>
<div class="r" style="left:30px;top:571px;width:654px;height:1px;background:#000"></div>
<div class="r" style="left:30px;top:591px;width:654px;height:1px;background:#000"></div>
<div class="r" style="left:30px;top:611px;width:654px;height:1px;background:#000"></div>
<div class="r" style="left:335px;top:496px;width:1px;height:137px;background:#000"></div>
<div class="r" style="left:683px;top:494px;width:2px;height:141px;background:#000"></div>
<div class="r" style="left:683px;top:404px;width:867px;height:27px;border:2px solid #217346"></div>
<div class="r" style="left:1546px;top:427px;width:5px;height:5px;background:#217346;outline:1px solid #fff"></div>
<div class="t" style="left:160.50px;top:386px;font-size:13.68px;line-height:15px;color:#000;font-weight:bold;transform:scaleX(1.0092);">G<span style="font-size:9.87px;position:relative;top:3.8px">O2,atm</span></div>
<div class="t" style="left:487.50px;top:386px;font-size:13.68px;line-height:15px;color:#000;font-weight:bold;transform:scaleX(1.0058);">G<span style="font-size:9.87px;position:relative;top:3.8px">N2,atm</span></div>
<div class="t" style="left:1101.50px;top:386px;font-size:12.97px;line-height:15px;color:#000;font-weight:bold;transform:scaleX(1.0704);">Rate</div>
<div class="t" style="left:687.80px;top:412px;font-size:12.83px;line-height:15px;color:#000;transform:scaleX(1.0855);-webkit-text-stroke:0.2px #000;">μ<span style="font-size:9.16px;position:relative;top:2.7px">NITO,T</span>*Msat<span style="font-size:9.16px;position:relative;top:2.7px">SNHx,KNHx,NITO</span>*X<span style="font-size:9.16px;position:relative;top:2.7px">NITO</span>*Msat<span style="font-size:9.16px;position:relative;top:2.7px">SO2,KO2,NITO</span>*Msat<span style="font-size:9.16px;position:relative;top:2.7px">SPO4,KPO4,BIO</span>*Msat<span style="font-size:9.16px;position:relative;top:2.7px">SALK,KALK</span></div>
<div class="t" style="left:687.80px;top:436px;font-size:12.83px;line-height:15px;color:#000;transform:scaleX(1.1013);-webkit-text-stroke:0.2px #000;">b<span style="font-size:9.16px;position:relative;top:2.7px">NITO,T</span>*X<span style="font-size:9.16px;position:relative;top:2.7px">NITO</span>*(Msat<span style="font-size:9.16px;position:relative;top:2.7px">SO2,KO2,NITO</span>+η<span style="font-size:9.16px;position:relative;top:2.7px">b,anox</span>*Msat<span style="font-size:9.16px;position:relative;top:2.7px">SNOx,KNOx,NITO</span>*Minh<span style="font-size:9.16px;position:relative;top:2.7px">SO2,KO2,NITO</span>+η<span style="font-size:9.16px;position:relative;top:2.7px">b,ana</span>*Minh<span style="font-size:9.16px;position:relative;top:2.7px">SNOx,KNOx,NITO</span>*Minh<span style="font-size:9.16px;position:relative;top:2.7px">SO2,KO2,NITO</span>+m<span style="font-size:9.16px;position:relative;top:2.7px">tox,ana</span>)</div>
<div class="t" style="left:1551.40px;top:411px;font-size:12.83px;line-height:15px;color:#000;transform:scaleX(0.9810);-webkit-text-stroke:0.2px #000;">g</div>
<div class="t" style="left:1551.40px;top:435px;font-size:12.83px;line-height:15px;color:#000;transform:scaleX(0.9810);-webkit-text-stroke:0.2px #000;">g</div>
<div class="t" style="left:158.10px;top:503px;font-size:13.39px;line-height:15px;color:#000;transform:scaleX(1.1859);-webkit-text-stroke:0.2px #000;">-1/Δ<span style="font-size:9.59px;position:relative;top:3.0px">atm</span></div>
<div class="t" style="left:471.30px;top:503px;font-size:13.39px;line-height:15px;color:#000;transform:scaleX(1.0618);-webkit-text-stroke:0.2px #000;">-EEQ<span style="font-size:9.59px;position:relative;top:3.0px">N2</span>/Δ<span style="font-size:9.59px;position:relative;top:3.0px">atm</span></div>
<div class="t" style="left:488.70px;top:530px;font-size:13.39px;line-height:15px;color:#000;transform:scaleX(1.1746);-webkit-text-stroke:0.2px #000;">1/Δ<span style="font-size:9.59px;position:relative;top:3.0px">atm</span></div>
<div class="r" style="left:1px;top:649px;width:1585px;height:29px;background:#e6e6e6"></div>
<div class="r" style="left:1px;top:649px;width:1559px;height:1px;background:#a0a0a0"></div>
<div class="r" style="left:1px;top:678px;width:1585px;height:1px;background:#c8c8c8"></div>
<svg class="r" style="left:29px;top:659px;" width="6" height="9" viewBox="0 0 6 9"><path d="M5.5 0 V9 L0 4.5Z" fill="#bdbdbd"/></svg>
<svg class="r" style="left:58px;top:659px;" width="6" height="9" viewBox="0 0 6 9"><path d="M0 0 V9 L5.5 4.5Z" fill="#bdbdbd"/></svg>
<div class="r" style="left:104px;top:653px;width:1px;height:21px;background:#a8a8a8"></div>
<div class="r" style="left:166px;top:653px;width:1px;height:21px;background:#a8a8a8"></div>
<div class="r" style="left:280px;top:653px;width:1px;height:21px;background:#a8a8a8"></div>
<div class="r" style="left:622px;top:653px;width:1px;height:21px;background:#a8a8a8"></div>
<div class="r" style="left:805px;top:653px;width:1px;height:21px;background:#a8a8a8"></div>
<div class="t" style="left:117.80px;top:652px;font-size:15.93px;line-height:17px;color:#444;transform:scaleX(1.0192);">Help</div>
<div class="t" style="left:180.90px;top:652px;font-size:15.93px;line-height:17px;color:#444;transform:scaleX(1.0273);">Parameters</div>
<div class="t" style="left:295.00px;top:652px;font-size:15.93px;line-height:17px;color:#444;transform:scaleX(1.0416);">PU parameters</div>
<div class="r" style="left:422px;top:649px;width:76px;height:26px;background:#fff;border-left:1px solid #a0a0a0;border-right:1px solid #a0a0a0"></div>
<div class="r" style="left:422px;top:673px;width:76px;height:2px;background:#217346"></div>
<div class="t" style="left:435.00px;top:651px;font-size:16.92px;line-height:19px;color:#217346;font-weight:bold;transform:scaleX(1.0107);">Model</div>
<div class="t" style="left:510.40px;top:652px;font-size:15.93px;line-height:17px;color:#444;transform:scaleX(1.0782);">Components</div>
<div class="t" style="left:638.50px;top:652px;font-size:15.93px;line-height:17px;color:#444;transform:scaleX(1.0476);">Calculated variables</div>
<svg class="r" style="left:839px;top:655px;" width="20" height="20" viewBox="0 0 20 20"><circle cx="10" cy="10" r="9.2" fill="none" stroke="#777" stroke-width="1.2"/><path d="M10 4.5 V15.5 M4.5 10 H15.5" stroke="#666" stroke-width="1.4"/></svg>
<div class="r" style="left:1285px;top:657px;width:3px;height:3px;background:#b0b0b0"></div>
<div class="r" style="left:1285px;top:662px;width:3px;height:3px;background:#b0b0b0"></div>
<div class="r" style="left:1285px;top:667px;width:3px;height:3px;background:#b0b0b0"></div>
<div class="r" style="left:1303px;top:655px;width:258px;height:18px;background:#dadada"></div>
<div class="r" style="left:1303px;top:655px;width:19px;height:18px;background:#fff;border:1px solid #c6c6c6"></div>
<svg class="r" style="left:1309px;top:660px;" width="6" height="9" viewBox="0 0 6 9"><path d="M5.5 0 V9 L0 4.5Z" fill="#666"/></svg>
<div class="r" style="left:1496px;top:655px;width:37px;height:18px;background:#fff;border:1px solid #c6c6c6"></div>
<div class="r" style="left:1542px;top:655px;width:19px;height:18px;background:#fff;border:1px solid #c6c6c6"></div>
<svg class="r" style="left:1549px;top:660px;" width="6" height="9" viewBox="0 0 6 9"><path d="M0 0 V9 L5.5 4.5Z" fill="#666"/></svg>
<div class="r" style="left:1564px;top:258px;width:19px;height:391px;background:#dadada"></div>
<div class="r" style="left:1564px;top:258px;width:19px;height:19px;background:#fff;border:1px solid #c6c6c6"></div>
<svg class="r" style="left:1568px;top:265px;" width="11" height="6" viewBox="0 0 11 6"><path d="M0 6 H11 L5.5 0Z" fill="#666"/></svg>
<div class="r" style="left:1564px;top:277px;width:19px;height:118px;background:#fff;border:1px solid #c6c6c6"></div>
<div class="r" style="left:1564px;top:631px;width:19px;height:19px;background:#fff;border:1px solid #c6c6c6"></div>
<svg class="r" style="left:1568px;top:637px;" width="11" height="6" viewBox="0 0 11 6"><path d="M0 0 H11 L5.5 6Z" fill="#666"/></svg>
<div class="r" style="left:1px;top:679px;width:1585px;height:26px;background:#f3f2f1"></div>
<div class="t" style="left:11.30px;top:686px;font-size:12.69px;line-height:14px;color:#444;transform:scaleX(0.9705);">Ready</div>
<div class="r" style="left:1207px;top:679px;width:50px;height:26px;background:#d2d2d2"></div>
<svg class="r" style="left:1223px;top:683px;" width="17" height="17" viewBox="0 0 17 17"><rect x="0" y="0" width="16.8" height="16.4" rx="1" fill="#555"/><g fill="#d8d8d8"><rect x="2.2" y="2.2" width="2.8" height="2.8"/><rect x="6.9" y="2.2" width="2.8" height="2.8"/><rect x="11.9" y="2.2" width="2.8" height="2.8"/><rect x="2.2" y="6.9" width="2.8" height="2.8"/><rect x="6.9" y="6.9" width="2.8" height="2.8"/><rect x="11.9" y="6.9" width="2.8" height="2.8"/><rect x="2.2" y="11.9" width="2.8" height="2.8"/><rect x="6.9" y="11.9" width="2.8" height="2.8"/><rect x="11.9" y="11.9" width="2.8" height="2.8"/></g></svg>
<svg class="r" style="left:1273px;top:683px;" width="18" height="17" viewBox="0 0 18 17"><rect x="0.9" y="0.9" width="15.8" height="14.6" fill="#fff" stroke="#555" stroke-width="1.8"/><rect x="4.6" y="3.6" width="8.6" height="9.2" fill="#c8c8c8" stroke="#444" stroke-width="1.5"/><path d="M6 7 H11.8 M6 9.6 H11.8" stroke="#444" stroke-width="1.2"/></svg>
<svg class="r" style="left:1323px;top:683px;" width="18" height="17" viewBox="0 0 18 17"><path d="M0.9 0.9 H16.7 V15.5 H0.9 Z M0.9 9.5 H10.2 V0.9 M5.1 0.9 V9.5" fill="#fff" stroke="#555" stroke-width="1.7"/></svg>
<div class="r" style="left:1364px;top:691px;width:10px;height:1.2px;background:#555"></div>
<div class="r" style="left:1380px;top:691.5px;width:125px;height:1px;background:#9a9a9a"></div>
<div class="r" style="left:1430px;top:685px;width:6px;height:14px;background:#666"></div>
<div class="r" style="left:1442px;top:688px;width:1px;height:8px;background:#9a9a9a"></div>
<div class="r" style="left:1511px;top:691px;width:10px;height:1.2px;background:#555"></div>
<div class="r" style="left:1515.4px;top:686.5px;width:1.2px;height:10px;background:#555"></div>
<div class="t" style="left:1537.30px;top:685px;font-size:13.68px;line-height:15px;color:#444;transform:scaleX(0.8661);">85%</div>
</body></html>
